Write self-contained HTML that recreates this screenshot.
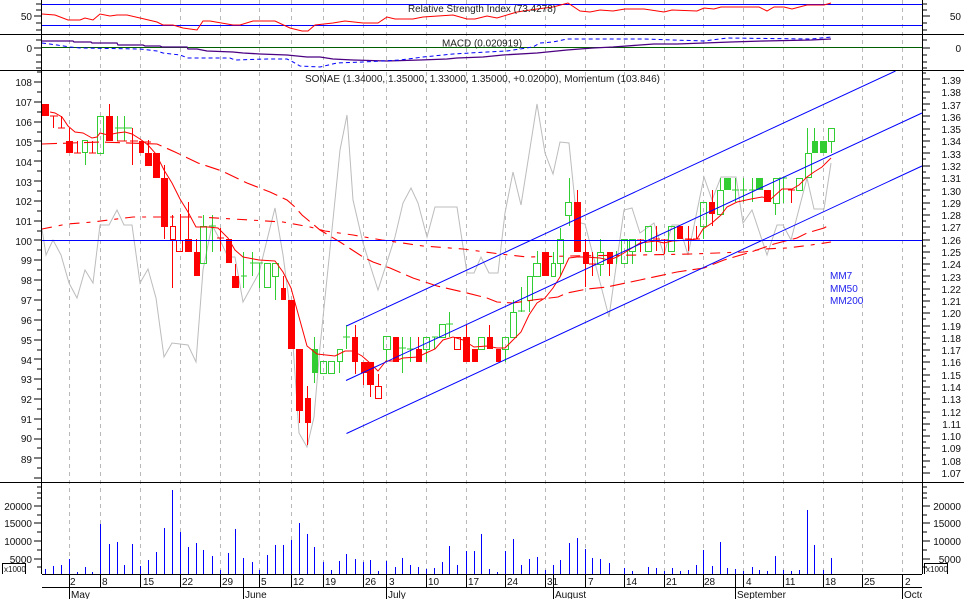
<!DOCTYPE html>
<html><head><meta charset="utf-8"><style>
html,body{margin:0;padding:0;background:#fff;width:964px;height:599px;overflow:hidden}
svg{display:block;font-family:"Liberation Sans",sans-serif;font-size:10px;fill:#111}
</style></head><body>
<svg width="964" height="599" viewBox="0 0 964 599" xmlns="http://www.w3.org/2000/svg">
<defs><clipPath id="c"><rect x="900" y="587" width="22" height="12"/></clipPath></defs>
<!-- dashed verticals -->
<path fill="none" stroke="#b8b8b8" stroke-dasharray="4 4" shape-rendering="crispEdges" d="M69.5 0V574M100.5 0V574M140.5 0V574M180.5 0V574M220.5 0V574M259.5 0V574M291.5 0V574M323.5 0V574M363.5 0V574M386.5 0V574M426.5 0V574M466.5 0V574M505.5 0V574M545.5 0V574M585.5 0V574M624.5 0V574M664.5 0V574M703.5 0V574M743.5 0V574M783.5 0V574M823.5 0V574M862.5 0V574M902.5 0V574"/>
<!-- momentum -->
<polyline fill="none" stroke="#bcbcbc" points="42,229 46,255 53,240 61,255 69,283 77,298 85,270 93,283 100,225 109,225 117,210 124,225 132,225 140,283 148,269 156,298 164,357 172,343 188,345 196,362 203,270 212,225 220,240 228,257 235,257 243,302 259,273 267,240 275,208 283,255 291,315 299,433 307,447 314,417 320,347 335,200 340,150 347,115 353,200 363,243 378,290 395,237 403,203 411,188 418,203 427,237 435,207 457,207 467,273 474,273 481,257 489,273 498,273 505,213 513,172 521,205 537,104 545,153 553,174 560,142 569,143 577,222 585,224 609,317 624,210 632,208 640,233 654,223 664,255 672,225 679,225 688,255 704,177 712,200 721,177 736,177 743,223 752,210 767,255 777,225 783,225 791,240 807,178 814,209 824,209 831,163"/>
<!-- volume -->
<path fill="none" stroke="#0000ff" shape-rendering="crispEdges" d="M45.5 574V569M53.5 574V566M61.5 574V565M69.5 574V559M77.5 574V572M85.5 574V567M92.5 574V572M100.5 574V524M109.5 574V544M117.5 574V542M124.5 574V565M132.5 574V544M140.5 574V566M148.5 574V560M156.5 574V552M164.5 574V528M172.5 574V490M180.5 574V532M188.5 574V547M196.5 574V543M203.5 574V550M212.5 574V556M220.5 574V570M228.5 574V553M235.5 574V529M243.5 574V558M252.5 574V562M259.5 574V570M267.5 574V555M275.5 574V545M283.5 574V545M291.5 574V540M299.5 574V523M307.5 574V534M314.5 574V547M323.5 574V562M331.5 574V570M339.5 574V561M346.5 574V554M355.5 574V559M363.5 574V562M370.5 574V560M378.5 574V571M386.5 574V561M395.5 574V567M402.5 574V558M410.5 574V565M418.5 574V567M426.5 574V569M434.5 574V568M442.5 574V562M449.5 574V546M457.5 574V565M466.5 574V551M474.5 574V551M481.5 574V534M489.5 574V569M497.5 574V572M505.5 574V551M513.5 574V539M521.5 574V565M529.5 574V559M537.5 574V557M545.5 574V570M553.5 574V565M560.5 574V560M569.5 574V543M577.5 574V538M585.5 574V549M592.5 574V558M600.5 574V559M609.5 574V563M624.5 574V568M632.5 574V571M648.5 574V567M656.5 574V568M664.5 574V571M672.5 574V568M680.5 574V571M688.5 574V570M696.5 574V565M703.5 574V550M712.5 574V566M720.5 574V542M727.5 574V568M735.5 574V569M743.5 574V571M752.5 574V567M759.5 574V570M767.5 574V571M775.5 574V556M783.5 574V570M791.5 574V571M799.5 574V570M807.5 574V510M814.5 574V545M823.5 574V570M831.5 574V558"/>
<!-- candles green -->
<g shape-rendering="crispEdges">
<path fill="none" stroke="#32cd32" d="M85.5 153V165M117.5 116V141M115 128H132M124.5 116V141M203.5 215V226M212.5 215V252M209 226H216M243.5 252V288M241 276H247M252.5 252V276M250 263H263M259.5 263V288M275.5 276V300M314.5 337V349M314.5 373V383M339.5 361V373M346.5 325V349M343 337H350M386.5 349V361M402.5 337V373M399 348H406M410.5 337V362M407 349H414M426.5 349V362M434.5 337V349M432 337H438M449.5 312V337M446 324H453M505.5 349V362M513.5 300V312M521.5 287V312M518 311H525M529.5 300V312M537.5 251V263M553.5 252V263M560.5 228V239M560.5 263V276M569.5 178V202M569.5 215V226M600.5 239V252M600.5 264V276M616.5 251V264M632.5 251V264M703.5 226V239M720.5 178V190M735.5 178V202M732 190H739M743.5 178V202M740 190H747M752.5 178V202M749 190H756M775.5 203V215M783.5 178V203M779 178H787M807.5 128V153M814.5 128V141M831.5 141V153M727.5 178V190M759.5 178V190"/>
<g fill="none" stroke="#32cd32">
<rect x="82.5" y="140.5" width="5" height="12"/><rect x="97.5" y="116.5" width="6" height="37"/><rect x="200.5" y="226.5" width="6" height="37"/><rect x="264.5" y="263.5" width="6" height="24"/><rect x="272.5" y="263.5" width="6" height="13"/><rect x="320.5" y="361.5" width="6" height="12"/><rect x="328.5" y="361.5" width="6" height="12"/><rect x="337.5" y="349.5" width="5" height="12"/><rect x="383.5" y="336.5" width="7" height="13"/><rect x="423.5" y="337.5" width="6" height="12"/><rect x="439.5" y="324.5" width="6" height="13"/><rect x="478.5" y="337.5" width="6" height="12"/><rect x="502.5" y="337.5" width="6" height="12"/><rect x="510.5" y="312.5" width="6" height="25"/><rect x="527.5" y="276.5" width="5" height="24"/><rect x="533.5" y="263.5" width="7" height="13"/><rect x="551.5" y="263.5" width="4" height="13"/><rect x="557.5" y="239.5" width="6" height="24"/><rect x="565.5" y="202.5" width="6" height="13"/><rect x="597.5" y="252.5" width="6" height="12"/><rect x="621.5" y="239.5" width="6" height="24"/><rect x="629.5" y="239.5" width="6" height="12"/><rect x="645.5" y="226.5" width="6" height="25"/><rect x="668.5" y="226.5" width="6" height="25"/><rect x="700.5" y="202.5" width="6" height="24"/><rect x="717.5" y="190.5" width="6" height="24"/><rect x="773.5" y="178.5" width="6" height="25"/><rect x="796.5" y="178.5" width="6" height="12"/><rect x="805.5" y="153.5" width="6" height="24"/><rect x="828.5" y="128.5" width="6" height="13"/>
</g>
<g fill="#32cd32">
<rect x="312" y="349" width="6" height="24"/><rect x="724" y="178" width="7" height="12"/><rect x="756" y="178" width="7" height="12"/><rect x="812" y="141" width="6" height="12"/><rect x="820" y="141" width="7" height="12"/>
</g>
<!-- candles red -->
<path fill="none" stroke="#ff0000" d="M53.5 116V128M50 116H58M61.5 116V128M58 128H65M69.5 128V141M77.5 141V153M74 153H81M92.5 141V153M89 153H96M109.5 104V116M117 141H127M132.5 128V165M130 141H138M148.5 140V153M143 142H151M164.5 165V178M164.5 227V239M172.5 215V226M172.5 240V288M180.5 214V240M188.5 202V239M196.5 239V252M220.5 228V251M217 238H224M235.5 264V276M283.5 276V288M307.5 386V398M307.5 423V445M299.5 411V423M355.5 325V337M355.5 362V374M363.5 373V385M370.5 385V397M378.5 374V386M418.5 337V349M466.5 325V337M489.5 325V337M577.5 190V202M585.5 239V252M585.5 264V287M592.5 252V276M589 264H596M609.5 264V276M640.5 239V252M637 240H644M656.5 226V251M653 239H660M664.5 239V254M661 240H668M688.5 226V251M685 239H692M696.5 226V239M693 239H700M712.5 190V202M712.5 214V226M791.5 190V203M788 190H795"/>
<g fill="none" stroke="#ff0000">
<rect x="170.5" y="226.5" width="5" height="13"/><rect x="176.5" y="240.5" width="6" height="11"/><rect x="375.5" y="386.5" width="6" height="12"/><rect x="454.5" y="337.5" width="6" height="12"/>
</g>
<g fill="#ff0000">
<rect x="42" y="104" width="7" height="12"/><rect x="66" y="141" width="7" height="12"/><rect x="106" y="116" width="7" height="25"/><rect x="139" y="141" width="5" height="12"/><rect x="145" y="153" width="7" height="13"/><rect x="153" y="153" width="7" height="25"/><rect x="161" y="178" width="7" height="49"/><rect x="185" y="239" width="7" height="13"/><rect x="194" y="252" width="6" height="24"/><rect x="226" y="239" width="6" height="24"/><rect x="232" y="276" width="7" height="12"/><rect x="281" y="288" width="5" height="12"/><rect x="288" y="300" width="7" height="49"/><rect x="296" y="349" width="7" height="62"/><rect x="305" y="398" width="6" height="25"/><rect x="352" y="337" width="6" height="25"/><rect x="361" y="362" width="7" height="11"/><rect x="367" y="362" width="7" height="23"/><rect x="393" y="337" width="6" height="25"/><rect x="416" y="349" width="6" height="13"/><rect x="463" y="337" width="7" height="25"/><rect x="472" y="349" width="6" height="13"/><rect x="487" y="337" width="6" height="12"/><rect x="496" y="349" width="5" height="13"/><rect x="542" y="252" width="7" height="24"/><rect x="574" y="202" width="7" height="50"/><rect x="583" y="252" width="6" height="12"/><rect x="607" y="252" width="6" height="12"/><rect x="677" y="226" width="6" height="13"/><rect x="709" y="202" width="6" height="12"/><rect x="764" y="190" width="7" height="12"/>
</g>
</g>
<!-- moving averages -->
<polyline fill="none" stroke="#ff0000" points="50,112 55,113 62,117 68,126 75,132 83,133 92,138 97,137 100,133 108,135 117,133 125,132 132,134 140,139 148,145 156,154 164,170 172,183 180,199 188,212 196,227 208,227 218,228 228,238 235,250 243,257 259,260 275,261 283,272 291,288 299,317 307,346 317,354 335,356 345,351 353,351 362,356 370,363 378,371 386,361 395,361 403,358 418,357 426,353 435,349 443,340 453,337 463,340 474,347 487,346 497,348 505,348 513,340 521,332 529,315 537,303 545,298 553,288 560,277 569,258 577,257 585,257 600,258 609,260 617,257 624,253 632,248 640,243 656,241 664,243 672,241 690,240 697,239 703,229 712,223 721,215 727,207 737,202 751,199 762,197 771,199 782,189 792,189 799,185 807,177 814,172 822,167 831,158"/>
<polyline fill="none" stroke="#ff0000" stroke-width="1.1" stroke-dasharray="15 6" points="42,144 100,142 157,144 175,152 198,163 222,171 247,183 270,192 287,200 295,207 302,215 320,230 340,242 363,257 373,262 390,268 413,278 437,286 463,292 487,298 497,302 513,303 533,300 558,297 567,293 587,289 607,287 640,280 677,272 704,268 724,260 751,252 774,244 797,238 807,233 824,228 831,224"/>
<polyline fill="none" stroke="#ff0000" stroke-width="1.1" stroke-dasharray="10 7 4 7" points="42,229 67,224 93,222 133,217 200,217 233,219 283,222 310,227 325,231 353,235 382,240 423,246 463,249 500,254 527,257 570,256 640,255 691,254 717,253 744,252 764,249 787,248 811,245 831,242"/>
<!-- blue lines -->
<path fill="none" stroke="#0000ff" d="M346.5 326L895.5 71M346 380.5L922 113M346.5 433.5L922 166"/>
<path fill="none" stroke="#0000ff" shape-rendering="crispEdges" d="M42 240.5H922M42 4.5H922M42 25.5H922"/>
<!-- RSI -->
<polyline fill="none" stroke="#ff0000" points="42,14 55,15 68,20 80,20 85,18 93,20 100,14 110,16 117,15 127,15 140,18 157,22 163,25 173,25 183,28 197,30 203,21 210,21 233,25 240,25 253,21 275,21 290,28 302,31 308,31 315,25 333,23 345,21 363,23 378,23 387,17 395,19 413,19 423,17 453,15 467,19 475,19 487,16 497,18 517,12 537,9 553,7 568,3 580,11 590,12 600,10 613,11 625,9 644,9 664,12 672,10 697,11 704,8 714,9 721,7 759,7 767,11 774,7 784,7 792,9 807,5 824,5 831,3"/>
<!-- MACD -->
<path fill="none" stroke="#006000" shape-rendering="crispEdges" d="M42 47.5H922"/>
<polyline fill="none" stroke="#4b0082" stroke-width="1.3" points="42,41 73,41 74,42 91,42 92,43 117,43 118,45 143,45 145,46 160,46 162,47 187,47 188,49 197,49 207,51 233,52 243,53 260,54 287,55 297,56 307,57 320,57 333,59 353,60 387,61 420,60 447,59 457,58 483,57 503,55 537,53 567,50 593,48 613,47 640,45 654,44 677,44 704,43 731,42 764,41 811,40 831,39"/>
<polyline fill="none" stroke="#0000ff" stroke-dasharray="4 3" points="42,43 57,45 70,47 80,48 140,49 157,51 163,53 180,55 188,58 230,58 235,60 267,59 287,59 293,62 300,66 320,67 337,63 363,62 400,60 423,57 453,54 487,52 507,51 533,47 540,43 553,42 567,39 644,39 704,41 727,38 811,39 831,37"/>
<!-- frame -->
<path fill="none" stroke="#000" shape-rendering="crispEdges" d="M41.5 0V574M922.5 0V574M0 34.5H964M0 70.5H964M0 482.5H964M42 574.5H922M42 587.5H922M2.5 574V563.5H25.5V574M924.5 574V563.5H947.5V574
M34 16H41M922 16H930M36 4H41M36 10H41M36 23H41M36 30H41M922 4H927M922 10H927M922 23H927M922 30H927
M34 48H41M922 48H930M36 40H41M36 55H41M36 62H41M36 68H41M922 40H927M922 55H927M922 62H927M922 68H927
M34 82H41M34 102H41M34 122H41M34 141H41M34 161H41M34 181H41M34 201H41M34 221H41M34 240H41M34 260H41M34 280H41M34 300H41M34 320H41M34 340H41M34 359H41M34 379H41M34 399H41M34 419H41M34 439H41M34 458H41M34 478H41
M37 72H41M37 92H41M37 112H41M37 132H41M37 151H41M37 171H41M37 191H41M37 211H41M37 231H41M37 250H41M37 270H41M37 290H41M37 310H41M37 330H41M37 350H41M37 369H41M37 389H41M37 409H41M37 429H41M37 448H41M37 468H41
M34 506H41M34 523H41M34 541H41M34 559H41M922 506H930M922 523H930M922 541H930M922 559H930
M37 487H41M37 493H41M37 498H41M37 515H41M37 532H41M37 550H41M37 567H41M922 487H927M922 493H927M922 498H927M922 515H927M922 532H927M922 550H927M922 567H927
M922 79H930M922 92H930M922 104H930M922 116H930M922 129H930M922 141H930M922 153H930M922 166H930M922 178H930M922 190H930M922 203H930M922 215H930M922 227H930M922 240H930M922 252H930M922 264H930M922 276H930M922 289H930M922 301H930M922 313H930M922 326H930M922 338H930M922 350H930M922 362H930M922 375H930M922 387H930M922 399H930M922 412H930M922 424H930M922 436H930M922 448H930M922 461H930M922 473H930
M922 73H926M922 85H926M922 98H926M922 110H926M922 122H926M922 135H926M922 147H926M922 159H926M922 172H926M922 184H926M922 196H926M922 209H926M922 221H926M922 233H926M922 246H926M922 258H926M922 270H926M922 282H926M922 295H926M922 307H926M922 319H926M922 332H926M922 344H926M922 356H926M922 369H926M922 381H926M922 393H926M922 405H926M922 418H926M922 430H926M922 442H926M922 455H926M922 467H926
M69.5 574V599M100.5 574V587M140.5 574V587M180.5 574V587M220.5 574V587M243.5 574V599M259.5 574V587M291.5 574V587M323.5 574V587M363.5 574V587M386.5 574V599M426.5 574V587M466.5 574V587M505.5 574V587M545.5 574V587M553.5 574V599M585.5 574V587M624.5 574V587M664.5 574V587M703.5 574V587M735.5 574V599M743.5 574V587M783.5 574V587M823.5 574V587M862.5 574V587M902.5 574V599"/>
<!-- titles -->
<text x="408" y="12" textLength="148" lengthAdjust="spacingAndGlyphs" fill="#222">Relative Strength Index (73.4278)</text>
<text x="442" y="46.500" textLength="80" lengthAdjust="spacingAndGlyphs" fill="#222">MACD (0.020919)</text>
<text x="305" y="82" textLength="355" lengthAdjust="spacingAndGlyphs" fill="#222">SONAE (1.34000, 1.35000, 1.33000, 1.35000, +0.02000), Momentum (103.846)</text>
<g fill="#2222ee"><text x="830" y="279">MM7</text><text x="830" y="292">MM50</text><text x="830" y="304">MM200</text></g>
<!-- left labels -->
<g text-anchor="end">
<text x="32" y="20">50</text><text x="32" y="52">0</text>
<text x="32" y="86">108</text><text x="32" y="106">107</text><text x="32" y="126">106</text><text x="32" y="146">105</text><text x="32" y="166">104</text><text x="32" y="186">103</text><text x="32" y="205">102</text><text x="32" y="225">101</text><text x="32" y="245">100</text><text x="32" y="264">99</text><text x="32" y="284">98</text><text x="32" y="304">97</text><text x="32" y="324">96</text><text x="32" y="344">95</text><text x="32" y="364">94</text><text x="32" y="383">93</text><text x="32" y="403">92</text><text x="32" y="423">91</text><text x="32" y="442">90</text><text x="32" y="463">89</text>
<text x="32" y="510">20000</text><text x="32" y="527">15000</text><text x="32" y="545">10000</text><text x="32" y="563">5000</text>
<!-- right labels -->
<text x="961" y="20">50</text><text x="961" y="52">0</text>
<text x="961" y="84">1.39</text><text x="961" y="96">1.38</text><text x="961" y="109">1.37</text><text x="961" y="121">1.36</text><text x="961" y="133">1.35</text><text x="961" y="145">1.34</text><text x="961" y="158">1.33</text><text x="961" y="170">1.32</text><text x="961" y="182">1.31</text><text x="961" y="195">1.30</text><text x="961" y="207">1.29</text><text x="961" y="219">1.28</text><text x="961" y="231">1.27</text><text x="961" y="244">1.26</text><text x="961" y="256">1.25</text><text x="961" y="268">1.24</text><text x="961" y="281">1.23</text><text x="961" y="293">1.22</text><text x="961" y="305">1.21</text><text x="961" y="317">1.20</text><text x="961" y="330">1.19</text><text x="961" y="342">1.18</text><text x="961" y="354">1.17</text><text x="961" y="366">1.16</text><text x="961" y="379">1.15</text><text x="961" y="391">1.14</text><text x="961" y="403">1.13</text><text x="961" y="416">1.12</text><text x="961" y="428">1.11</text><text x="961" y="440">1.10</text><text x="961" y="452">1.09</text><text x="961" y="465">1.08</text><text x="961" y="477">1.07</text>
<text x="961" y="510">20000</text><text x="961" y="527">15000</text><text x="961" y="545">10000</text><text x="961" y="563">5000</text>
</g>
<text x="4" y="572" font-size="8">x1000</text><text x="926" y="572" font-size="8">x1000</text>
<!-- dates -->
<g>
<text x="70" y="585">2</text><text x="102" y="585">8</text><text x="143" y="585">15</text><text x="182" y="585">22</text><text x="222" y="585">29</text><text x="261" y="585">5</text><text x="293" y="585">12</text><text x="325" y="585">19</text><text x="365" y="585">26</text><text x="389" y="585">3</text><text x="428" y="585">10</text><text x="468" y="585">17</text><text x="507" y="585">24</text><text x="547" y="585">31</text><text x="588" y="585">7</text><text x="626" y="585">14</text><text x="666" y="585">21</text><text x="704" y="585">28</text><text x="746" y="585">4</text><text x="785" y="585">11</text><text x="825" y="585">18</text><text x="864" y="585">25</text><text x="905" y="585">2</text>
<text x="71" y="598">May</text><text x="245" y="598">June</text><text x="388" y="598">July</text><text x="555" y="598">August</text><text x="737" y="598">September</text>
<g clip-path="url(#c)"><text x="904" y="598">October</text></g>
</g>
</svg>
</body></html>
